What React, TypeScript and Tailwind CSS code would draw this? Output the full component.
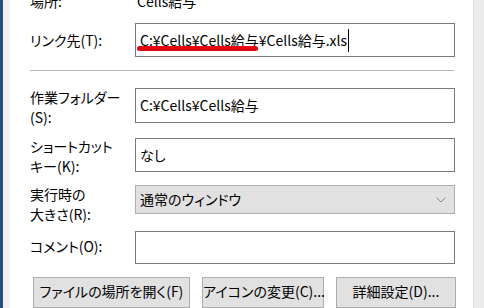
import React from "react"

const font = "font-['Noto_Sans_CJK_JP','Noto_Sans',sans-serif] [font-feature-settings:'palt'] text-[14px] text-black"

function Field({ label, children, className = "" }: { label: React.ReactNode; children: React.ReactNode; className?: string }) {
  return (
    <div className={`flex items-center ${className}`}>
      <div className="w-[105px] shrink-0 leading-[20px]">{label}</div>
      {children}
    </div>
  )
}

export default function App() {
  return (
    <div className={`flex h-[308px] w-[484px] overflow-hidden bg-white ${font}`}>
      <div className="w-[3px] shrink-0 bg-[#2a4d78]" />
      <div className="w-[7px] shrink-0 bg-[#f0f0f0]" />

      <div className="flex flex-1 flex-col pl-[20px] pr-[17px]">
        <div className="-mt-[9px] flex h-[20px] shrink-0 items-center leading-[20px]">
          <div className="w-[107px] shrink-0">場所:</div>
          <div>Cells給与</div>
        </div>

        <Field label="リンク先(T):" className="mt-[12px] h-[34px] shrink-0">
          <div className="relative flex h-[34px] w-[320px] items-center border border-[#7a7a7a] pl-[4px]">
            <span>C:¥Cells¥Cells給与¥Cells給与.xls</span>
            <span className="ml-px h-[23px] w-px bg-black" />
            <div className="absolute left-[1px] top-[22px] h-[5px] w-[121px] rounded-full bg-[#e30613]" />
          </div>
        </Field>

        <div className="mt-[13px] h-px w-[424px] shrink-0 bg-[#b9b9b9]" />

        <Field label={<div className="mt-[3px]">作業フォルダー<br />(S):</div>} className="mt-[17px] h-[35px] shrink-0">
          <div className="flex h-[35px] w-[320px] items-center border border-[#7a7a7a] pl-[4px]">C:¥Cells¥Cells給与</div>
        </Field>

        <Field label={<div className="mt-[2px]">ショートカット<br />キー(K):</div>} className="mt-[15px] h-[34px] shrink-0">
          <div className="flex h-[34px] w-[320px] items-center border border-[#7a7a7a] pl-[4px]">なし</div>
        </Field>

        <Field label={<div className="mt-[8px]">実行時の<br />大きさ(R):</div>} className="mt-[13px] h-[29px] shrink-0">
          <div className="flex h-[29px] w-[320px] items-center justify-between border border-[#adadad] bg-[#e1e1e1] pl-[4px] pr-[8px]">
            <span>通常のウィンドウ</span>
            <svg width="10" height="6" viewBox="0 0 10 6" fill="none">
              <path d="M0.5 0.5 L5 5 L9.5 0.5" stroke="#707070" strokeWidth="0.8" />
            </svg>
          </div>
        </Field>

        <Field label={<div className="-mt-[4px]">コメント(O):</div>} className="mt-[17px] h-[33px] shrink-0">
          <div className="h-[33px] w-[320px] border border-[#7a7a7a]" />
        </Field>

        <div className="mt-[13px] flex shrink-0 gap-[12px] pl-[3px]">
          <button className="h-[31px] w-[157px] whitespace-nowrap border border-[#adadad] bg-[#e1e1e1] px-0 pb-[2px]">ファイルの場所を開く(F)</button>
          <button className="h-[31px] w-[122px] whitespace-nowrap border border-[#adadad] bg-[#e1e1e1] px-0 pb-[2px]">アイコンの変更(C)...</button>
          <button className="h-[31px] w-[120px] whitespace-nowrap border border-[#adadad] bg-[#e1e1e1] px-0 pb-[2px]">詳細設定(D)...</button>
        </div>
      </div>

      <div className="w-[11px] shrink-0 border-l border-[#dcdcdc] bg-[#ececec]" />
      <div className="w-px shrink-0 bg-[#2a4d78]" />
    </div>
  )
}
